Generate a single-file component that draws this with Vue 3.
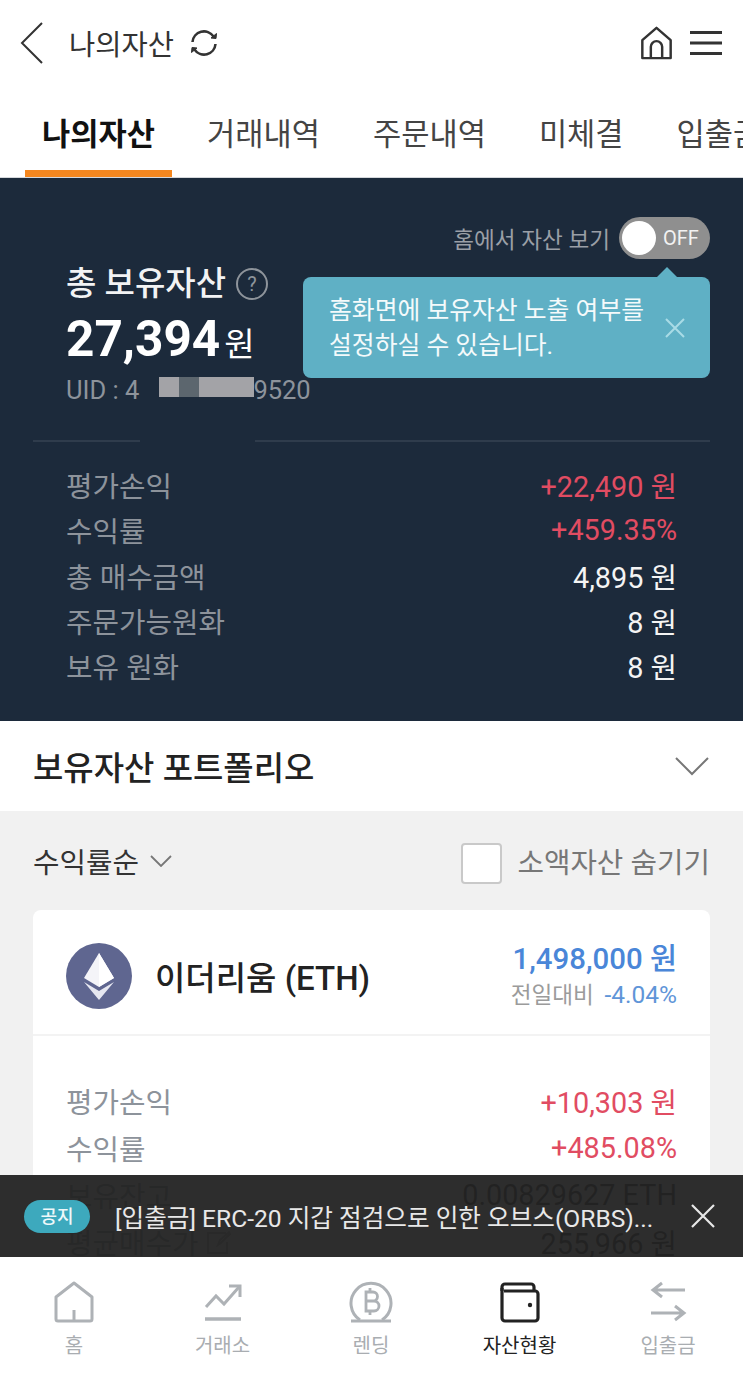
<template>
  <div class="page">
    <header class="topbar">
      <svg class="back" width="26" height="44" viewBox="0 0 26 44"><path d="M23 2 3 22l20 20" fill="none" stroke="#333" stroke-width="2"/></svg>
      <span class="page-title">나의자산</span>
      <svg class="refresh" width="30" height="30" viewBox="0 0 30 30" fill="none" stroke="#333" stroke-width="2.600">
        <path d="M3.500 14A11.500 11.500 0 0 1 24.500 8.500"/>
        <path d="M26.500 16A11.500 11.500 0 0 1 5.500 21.500"/>
        <path d="M22 10l5 .5.5-5z" fill="#333" stroke-width="1"/>
        <path d="M8 20l-5-.5-.5 5z" fill="#333" stroke-width="1"/>
      </svg>
      <div class="top-actions">
        <svg width="35" height="34" viewBox="0 0 36 36" fill="none" stroke="#333" stroke-width="2.600" stroke-linejoin="round"><path d="M3 15 18 2l15 13v19H3z"/><path d="M12 34V22a6 6 0 0 1 12 0v12"/></svg>
        <svg width="32" height="24" viewBox="0 0 32 24" fill="#333"><rect y="0" width="32" height="3"/><rect y="10.500" width="32" height="3"/><rect y="21" width="32" height="3"/></svg>
      </div>
    </header>

    <nav class="tabs">
      <a v-for="(t, i) in tabs" :key="t" class="tab" :class="{ active: i === 0 }">{{ t }}</a>
    </nav>

    <section class="summary">
      <div class="toggle-row">
        <span class="toggle-label">홈에서 자산 보기</span>
        <div class="toggle"><i class="knob"></i><span>OFF</span></div>
      </div>
      <div class="total-title">총 보유자산 <b class="help">?</b></div>
      <div class="total-value"><strong>27,394</strong><span>원</span></div>
      <div class="uid">UID : 4<i class="blur"><u></u><u class="dark"></u><u></u></i>9520</div>

      <div class="tooltip">
        <p>홈화면에 보유자산 노출 여부를<br />설정하실 수 있습니다.</p>
        <svg width="22" height="22" viewBox="0 0 22 22" stroke="#a9dbe6" stroke-width="2"><path d="M2 2l18 18M20 2 2 20"/></svg>
      </div>

      <div class="divider"><i></i><i></i></div>

      <dl class="rows">
        <div v-for="r in summaryRows" :key="r.label" class="row">
          <dt>{{ r.label }}</dt>
          <dd :class="{ up: r.up }">{{ r.value }}</dd>
        </div>
      </dl>
    </section>

    <section class="portfolio-head">
      <h2>보유자산 포트폴리오</h2>
      <svg width="36" height="20" viewBox="0 0 36 20" fill="none" stroke="#777" stroke-width="2"><path d="M2 2l16 16L34 2"/></svg>
    </section>

    <section class="list">
      <div class="filter">
        <span class="sort">수익률순
          <svg width="22" height="12" viewBox="0 0 22 12" fill="none" stroke="#777" stroke-width="1.800"><path d="M1 1l10 10L21 1"/></svg>
        </span>
        <label class="hide-small"><i class="check"></i>소액자산 숨기기</label>
      </div>

      <article class="coin-card">
        <div class="coin-head">
          <svg class="coin-logo" width="66" height="66" viewBox="0 0 66 66">
            <circle cx="33" cy="33" r="33" fill="#5f6690"/>
            <path d="M33 10 18 35l15 9 15-9z" fill="#f4f4f8"/>
            <path d="M18 39l15 9 15-9-15 18z" fill="#e6e7f0"/>
            <path d="M33 10v34l15-9z" fill="#fff"/>
          </svg>
          <h3>이더리움 (ETH)</h3>
          <div class="price">
            <strong>1,498,000 원</strong>
            <span class="compare">전일대비 <em>-4.04%</em></span>
          </div>
        </div>
        <dl class="rows coin-rows">
          <div v-for="r in coinRows" :key="r.label" class="row">
            <dt>{{ r.label }}<svg v-if="r.edit" class="edit" width="26" height="24" viewBox="0 0 26 24" fill="none" stroke="#aaa" stroke-width="2"><path d="M20 3H2v20h19V12M12 15l2-5 9-8 1 2-9 9z"/></svg></dt>
            <dd :class="{ up: r.up }">{{ r.value }}</dd>
          </div>
        </dl>
      </article>
    </section>

    <div class="notice">
      <span class="notice-tag">공지</span>
      <span class="notice-text">[입출금] ERC-20 지갑 점검으로 인한 오브스(ORBS)...</span>
      <svg width="26" height="26" viewBox="0 0 26 26" stroke="#e8e8e8" stroke-width="2.200"><path d="M2 2l22 22M24 2 2 24"/></svg>
    </div>

    <footer class="bottom-nav">
      <a class="nav-item">
        <svg width="44" height="44" viewBox="0 0 44 44" fill="none" stroke="#aeb2b6" stroke-width="3" stroke-linejoin="round"><path d="M4 17 22 3l18 14v22a2 2 0 0 1-2 2H6a2 2 0 0 1-2-2z"/><path d="M22 30v11"/></svg>
        <span>홈</span>
      </a>
      <a class="nav-item">
        <svg width="44" height="44" viewBox="0 0 44 44" fill="none" stroke="#aeb2b6" stroke-width="3"><path d="M5 27l10-11 8 8 15-17"/><path d="M28 6h11v11"/><path d="M4 39h36" stroke-width="3.500"/></svg>
        <span>거래소</span>
      </a>
      <a class="nav-item">
        <svg width="44" height="44" viewBox="0 0 44 44" fill="none" stroke="#aeb2b6" stroke-width="3"><path d="M11 40a20 20 0 1 1 22 0"/><path d="M2 41h40" stroke-width="3"/><path d="M17 12h7a4.500 4.500 0 0 1 0 9h-7h8a4.800 4.800 0 0 1 0 10h-8zM21 8v4M21 31v4" stroke-width="2.800"/></svg>
        <span>렌딩</span>
      </a>
      <a class="nav-item current">
        <svg width="44" height="44" viewBox="0 0 44 44" fill="none" stroke="#222" stroke-width="3.200" stroke-linejoin="round"><path d="M4 11V7a3 3 0 0 1 3-3h26a3 3 0 0 1 3 3v4"/><path d="M4 8v30a3 3 0 0 0 3 3h30a3 3 0 0 0 3-3V14a3 3 0 0 0-3-3H6"/><circle cx="32" cy="25" r="2.200" fill="#222" stroke="none"/></svg>
        <span>자산현황</span>
      </a>
      <a class="nav-item">
        <svg width="44" height="44" viewBox="0 0 44 44" fill="none" stroke="#aeb2b6" stroke-width="3"><path d="M39 10H8M16 3 7 10l9 7"/><path d="M5 33h32M29 26l9 7-9 7"/></svg>
        <span>입출금</span>
      </a>
    </footer>
  </div>
</template>

<script setup>
const tabs = ["나의자산", "거래내역", "주문내역", "미체결", "입출금"];

const summaryRows = [
  { label: "평가손익", value: "+22,490 원", up: true },
  { label: "수익률", value: "+459.35%", up: true },
  { label: "총 매수금액", value: "4,895 원" },
  { label: "주문가능원화", value: "8 원" },
  { label: "보유 원화", value: "8 원" },
];

const coinRows = [
  { label: "평가손익", value: "+10,303 원", up: true },
  { label: "수익률", value: "+485.08%", up: true },
  { label: "보유잔고", value: "0.00829627 ETH" },
  { label: "평균매수가", value: "255,966 원", edit: true },
];
</script>

<style>
html,
body {
  margin: 0;
  background: #f1f1f1;
}
</style>

<style scoped>
.page {
  position: relative;
  width: 743px;
  height: 1377px;
  overflow: hidden;
  background: #f1f1f1;
  font-family: Roboto, "Noto Sans CJK KR", sans-serif;
  color: #222;
}

/* Header */
.topbar {
  display: flex;
  align-items: center;
  height: 88px;
  padding: 0 21px 3px 19px;
  background: #fff;
  box-sizing: border-box;
}
.page-title {
  margin-left: 24px;
  font-size: 28.500px;
  color: #333;
}
.refresh {
  margin-left: 15px;
}
.top-actions {
  display: flex;
  align-items: center;
  gap: 16px;
  margin-left: auto;
}

/* Tabs */
.tabs {
  display: flex;
  gap: 53px;
  height: 90px;
  background: #fff;
  border-bottom: 1px solid #d5d8dc;
  box-sizing: border-box;
  white-space: nowrap;
  overflow: hidden;
}
.tab {
  flex: none;
  padding-top: 26px;
  font-size: 30.700px;
  line-height: 42px;
  color: #444;
}
.tab.active {
  width: 147px;
  margin: 0 -18px 0 25px;
  text-align: center;
  font-weight: 700;
  color: #111;
  border-bottom: 7px solid #f5871f;
}

/* Summary */
.summary {
  position: relative;
  height: 543px;
  padding: 39px 33px 0;
  background: #1c2a3b;
  box-sizing: border-box;
}
.toggle-row {
  display: flex;
  justify-content: flex-end;
  align-items: center;
  gap: 9px;
  height: 42px;
}
.toggle-label {
  font-size: 22.600px;
  color: #9a9fa6;
}
.toggle {
  display: flex;
  align-items: center;
  width: 91px;
  height: 42px;
  padding: 0 10px 0 3px;
  border-radius: 21px;
  background: #8f8f8f;
  box-sizing: border-box;
  color: #f2f2f2;
  font-size: 20px;
}
.knob {
  width: 34px;
  height: 34px;
  margin-right: 7px;
  border-radius: 50%;
  background: #fff;
}
.total-title {
  display: flex;
  align-items: center;
  gap: 10px;
  margin: 3px 0 0 33px;
  font-size: 33px;
  font-weight: 500;
  line-height: 44px;
  color: #f2f3f4;
}
.help {
  display: inline-block;
  width: 28px;
  height: 28px;
  border: 2.500px solid #8e949b;
  border-radius: 50%;
  font-size: 20px;
  font-weight: 400;
  line-height: 28px;
  text-align: center;
  color: #8e949b;
}
.total-value {
  display: flex;
  align-items: baseline;
  gap: 4px;
  margin: 3px 0 0 33px;
  line-height: 60px;
  color: #fff;
}
.total-value strong {
  font-size: 49.500px;
  font-weight: 700;
}
.total-value span {
  font-size: 33px;
}
.uid {
  display: flex;
  align-items: center;
  margin: -2px 0 0 33px;
  font-size: 25.500px;
  line-height: 34px;
  color: #8d939b;
}
.blur {
  display: flex;
  width: 95px;
  height: 20px;
  margin: -6px -1px 0 20px;
  background: #a3a3a7;
}
.blur u {
  flex: 1;
}
.blur u:first-child {
  flex: 0 0 20px;
}
.blur u.dark {
  flex: 0 0 20px;
  background: #5c666e;
}
.tooltip {
  position: absolute;
  top: 99px;
  left: 303px;
  display: flex;
  align-items: center;
  justify-content: space-between;
  width: 407px;
  height: 101px;
  padding: 0 24px 0 26px;
  border-radius: 8px;
  background: #5fb0c5;
  box-sizing: border-box;
  color: #f4fafb;
}
.tooltip::before {
  content: "";
  position: absolute;
  top: -10px;
  right: 33px;
  border: 10px solid transparent;
  border-top: 0;
  border-bottom-color: #5fb0c5;
}
.tooltip p {
  margin: 0;
  font-size: 24.800px;
  line-height: 35px;
}
.divider {
  display: flex;
  justify-content: space-between;
  margin-top: 33px;
}
.divider i {
  height: 2px;
  background: #2f3c4c;
}
.divider i:first-child {
  width: 107px;
}
.divider i:last-child {
  width: 455px;
}
.rows {
  margin: 0;
}
.summary .rows {
  margin-top: 20px;
  padding: 0 33px;
}
.row {
  display: flex;
  justify-content: space-between;
  align-items: center;
  height: 45.250px;
  font-size: 28.800px;
}
.row dt {
  display: flex;
  align-items: center;
  color: #8d939b;
}
.row dd {
  margin: 0;
  color: #f4f4f4;
}
.row dd.up {
  color: #e14c62;
}

/* Portfolio */
.portfolio-head {
  display: flex;
  justify-content: space-between;
  align-items: center;
  height: 90px;
  padding: 0 33px;
  background: #fff;
  box-sizing: border-box;
}
.portfolio-head h2 {
  margin: 0;
  font-size: 33px;
  font-weight: 500;
  color: #222;
}
.list {
  padding: 0 33px;
}
.filter {
  display: flex;
  justify-content: space-between;
  align-items: center;
  height: 99px;
  font-size: 28.800px;
}
.sort {
  display: flex;
  align-items: center;
  gap: 11px;
  color: #333;
}
.hide-small {
  display: flex;
  align-items: center;
  gap: 15px;
  color: #777;
}
.check {
  width: 41px;
  height: 41px;
  margin-top: 5px;
  border: 2px solid #c9c9c9;
  border-radius: 4px;
  background: #fff;
  box-sizing: border-box;
}
.coin-card {
  border-radius: 8px;
  background: #fff;
}
.coin-head {
  display: flex;
  align-items: center;
  height: 126px;
  padding: 8px 33px 0;
  border-bottom: 2px solid #f3f3f3;
  box-sizing: border-box;
}
.coin-head h3 {
  margin: 0 0 0 23px;
  font-size: 33px;
  font-weight: 500;
  color: #222;
}
.price {
  display: flex;
  flex-direction: column;
  align-items: flex-end;
  margin: -2px 0 0 auto;
}
.price strong {
  font-size: 29.400px;
  font-weight: 500;
  line-height: 40px;
  color: #4a86d8;
}
.compare {
  font-size: 22.600px;
  line-height: 32px;
  color: #9b9b9b;
}
.compare em {
  margin-left: 5px;
  font-size: 24.500px;
  font-style: normal;
  color: #5f95d8;
}
.coin-rows {
  padding: 41px 33px 0;
}
.coin-rows .row {
  height: 47px;
}
.coin-rows .row dd {
  color: #333;
}
.coin-rows .row dd.up {
  color: #e14c62;
}
.edit {
  margin-left: 8px;
}

/* Notice */
.notice {
  position: absolute;
  left: 0;
  right: 0;
  top: 1175px;
  display: flex;
  align-items: center;
  height: 82px;
  padding: 0 27px 0 24px;
  background: rgba(34, 34, 34, 0.95);
  box-sizing: border-box;
  color: #e8e8e8;
}
.notice-tag {
  flex: none;
  width: 66px;
  height: 33px;
  border-radius: 17px;
  background: #3da9bd;
  color: #eef8fa;
  font-size: 18px;
  font-weight: 500;
  line-height: 33px;
  text-align: center;
}
.notice-text {
  flex: 1;
  margin-left: 25px;
  font-size: 24.600px;
  white-space: nowrap;
  overflow: hidden;
}

/* Bottom navigation */
.bottom-nav {
  position: absolute;
  left: 0;
  right: 0;
  bottom: 0;
  display: flex;
  justify-content: space-between;
  height: 120px;
  padding: 23px 25px 0 24px;
  background: #fff;
  box-sizing: border-box;
}
.nav-item {
  display: flex;
  flex-direction: column;
  align-items: center;
  width: 100px;
  font-size: 20px;
  color: #a9adb1;
}
.nav-item span {
  margin-top: 7px;
  line-height: 30px;
  white-space: nowrap;
}
.nav-item.current {
  color: #222;
}
</style>
